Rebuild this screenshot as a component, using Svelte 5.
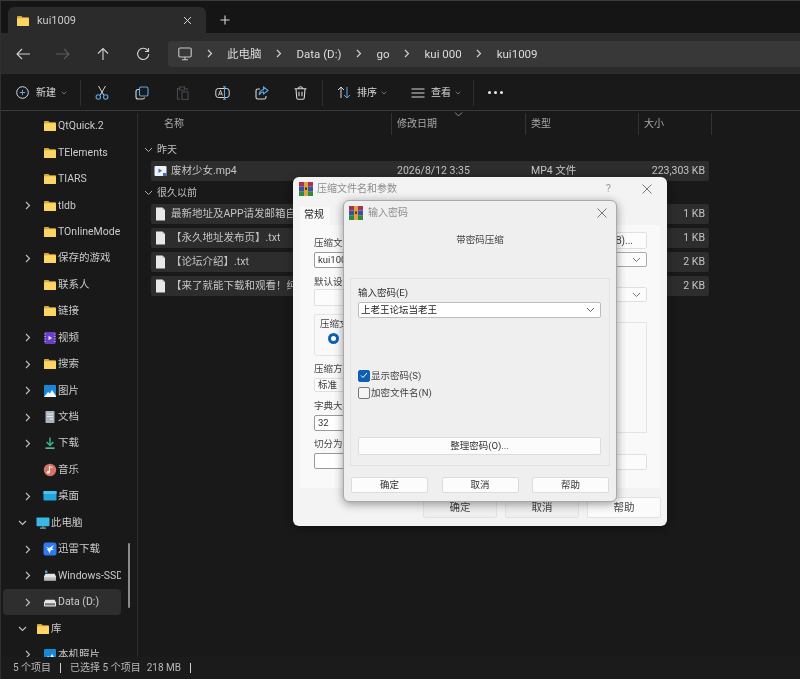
<script>
  const sidebar = [
    { label: 'QtQuick.2', icon: 'folder', level: 2 },
    { label: 'TElements', icon: 'folder', level: 2 },
    { label: 'TIARS', icon: 'folder', level: 2 },
    { label: 'tldb', icon: 'folder', level: 2, chev: 'right' },
    { label: 'TOnlineModel', icon: 'folder', level: 2 },
    { label: '保存的游戏', icon: 'folder', level: 2, chev: 'right' },
    { label: '联系人', icon: 'folder', level: 2 },
    { label: '链接', icon: 'folder', level: 2 },
    { label: '视频', icon: 'video', level: 2, chev: 'right' },
    { label: '搜索', icon: 'folder', level: 2, chev: 'right' },
    { label: '图片', icon: 'picture', level: 2, chev: 'right' },
    { label: '文档', icon: 'doc', level: 2, chev: 'right' },
    { label: '下载', icon: 'download', level: 2, chev: 'right' },
    { label: '音乐', icon: 'music', level: 2 },
    { label: '桌面', icon: 'desktop', level: 2, chev: 'right' },
    { label: '此电脑', icon: 'pc', level: 1, chev: 'down' },
    { label: '迅雷下载', icon: 'xunlei', level: 2, chev: 'right' },
    { label: 'Windows-SSD', icon: 'ssd', level: 2, chev: 'right' },
    { label: 'Data (D:)', icon: 'drive', level: 2, chev: 'right', active: true },
    { label: '库', icon: 'folder', level: 1, chev: 'down' },
    { label: '本机照片', icon: 'picture', level: 2, chev: 'right' }
  ];

  const crumbs = ['此电脑', 'Data (D:)', 'go', 'kui 000', 'kui1009'];

  const recent = [{ name: '废材少女.mp4', date: '2026/8/12 3:35', type: 'MP4 文件', size: '223,303 KB', video: true }];
  const older = [
    { name: '最新地址及APP请发邮箱自动获取.txt', date: '2024/3/2 12:10', type: '文本文档', size: '1 KB' },
    { name: '【永久地址发布页】.txt', date: '2024/3/2 12:10', type: '文本文档', size: '1 KB' },
    { name: '【论坛介绍】.txt', date: '2024/3/2 12:10', type: '文本文档', size: '2 KB' },
    { name: '【来了就能下载和观看！纯免费】.txt', date: '2024/3/2 12:10', type: '文本文档', size: '2 KB' }
  ];
</script>

{#snippet rar()}
  <svg class="rar" viewBox="0 0 14 14">
    <rect x="0" y="0" width="14" height="4.600" fill="#a8324e" />
    <rect x="0" y="4.600" width="14" height="4.600" fill="#3c4fa8" />
    <rect x="0" y="9.200" width="14" height="4.800" fill="#2f8a3c" />
    <rect x="5" y="0" width="4" height="14" fill="#d9a441" />
    <rect x="6" y="5.400" width="2" height="2.600" fill="#5a3a12" />
  </svg>
{/snippet}

{#snippet chevDown(c)}
  <svg width="9" height="6" viewBox="0 0 9 6"><path d="M1 1l3.500 3.500L8 1" fill="none" stroke={c} stroke-width="1" /></svg>
{/snippet}

{#snippet sideIcon(kind)}
  <svg width="14" height="14" viewBox="0 0 14 14">
    {#if kind === 'folder'}
      <path d="M1 3.200c0-.7.4-1.200 1-1.200h3.400l1.300 1.300H12c.6 0 1 .4 1 1V11c0 .6-.4 1-1 1H2c-.6 0-1-.4-1-1z" fill="#d9a63a" />
      <path d="M1 5c0-.5.4-.8 1-.8h10c.6 0 1 .3 1 .8v6c0 .6-.4 1-1 1H2c-.6 0-1-.4-1-1z" fill="#fbd667" />
    {:else if kind === 'video'}
      <rect x="1.500" y="1" width="11" height="12" rx="1.200" fill="#6b3fc4" />
      <path d="M1.500 3h1.200M1.500 5.500h1.200M1.500 8h1.200M1.500 10.500h1.200M11.300 3h1.200M11.300 5.500h1.200M11.300 8h1.200M11.300 10.500h1.200" stroke="#c9b4f2" stroke-width="1" />
      <path d="M5.500 4.800l3.600 2.200-3.600 2.200z" fill="#e6dcfb" />
    {:else if kind === 'picture'}
      <rect x="1" y="1" width="12" height="12" rx="1" fill="#1787d8" />
      <path d="M1 13l4-5 2 1.500 2-3.500 4 6v1z" fill="#f2f8fd" />
    {:else if kind === 'doc'}
      <rect x="2.500" y="1" width="9" height="12" rx=".8" fill="#a9b6c2" />
      <path d="M4 4h6M4 6.500h6M7 9h3" stroke="#e6ebef" stroke-width="1.100" />
    {:else if kind === 'download'}
      <path d="M7 1.500v7.500M3.600 6L7 9.400 10.400 6" fill="none" stroke="#2fb389" stroke-width="1.500" />
      <path d="M2.500 12.200h9" stroke="#8fd9c0" stroke-width="1.300" />
    {:else if kind === 'music'}
      <circle cx="7" cy="7" r="6.200" fill="#d1746a" />
      <path d="M6.500 9V3.500l3 1" fill="none" stroke="#fbe6e2" stroke-width="1.100" />
      <circle cx="5.300" cy="9.300" r="1.500" fill="#fbe6e2" />
    {:else if kind === 'desktop'}
      <rect x=".5" y="2" width="13" height="9.500" rx=".8" fill="#21a5dc" />
      <rect x=".5" y="2" width="13" height="3" fill="#4cc3ec" />
    {:else if kind === 'pc'}
      <rect x=".5" y="1.500" width="13" height="8.800" rx=".8" fill="#3bb7e3" />
      <path d="M4 12.200h6" stroke="#88a4b3" stroke-width="1.300" />
      <path d="M7 10.300v1.600" stroke="#88a4b3" stroke-width="1.200" />
    {:else if kind === 'xunlei'}
      <rect x=".5" y=".5" width="13" height="13" rx="2.500" fill="#2d7bf0" />
      <path d="M2.500 4.500l3.600 1.400L10.800 3 9 6.400l2 1-3.400 1.200-.9 3L5 8.400 3.600 7.400l1.600-.4z" fill="#f4f8ff" />
    {:else if kind === 'ssd'}
      <path d="M2 1.500h2.400v2.600H2z" fill="#3fa0e0" />
      <path d="M1 7.500l1.400-2.800h9.200L13 7.500v3.200c0 .4-.3.7-.7.7H1.700c-.4 0-.7-.3-.7-.7z" fill="#e4e4e4" />
      <rect x="1" y="8.400" width="12" height="3" fill="#b9b9b9" />
    {:else}
      <path d="M1 7.500l1.400-2.800h9.200L13 7.500v3.200c0 .4-.3.7-.7.7H1.700c-.4 0-.7-.3-.7-.7z" fill="#e4e4e4" />
      <rect x="2" y="8.200" width="10" height="2.200" fill="#777" />
    {/if}
  </svg>
{/snippet}

{#snippet fileRow(f)}
  <div class="file-row">
    <div class="file-name">
      {#if f.video}
        <svg width="13" height="12" viewBox="0 0 13 12">
          <rect x=".5" y="1" width="12" height="10" rx="1" fill="#eef1f5" />
          <path d="M4.500 3.500l3.600 2.300-3.600 2.300z" fill="#3f6fc4" />
          <rect x="9" y="8" width="3.500" height="3" fill="#3f6fc4" />
        </svg>
      {:else}
        <svg width="13" height="14" viewBox="0 0 13 14">
          <path d="M2 .5h6.500L11 3v10.500H2z" fill="#e8e8e8" />
          <path d="M8.500 .5L11 3H8.500z" fill="#b9b9b9" />
        </svg>
      {/if}
      <span>{f.name}</span>
    </div>
    <span>{f.date}</span>
    <span>{f.type}</span>
    <span class="size">{f.size}</span>
  </div>
{/snippet}

<div class="window">
  <div class="tabstrip">
    <div class="tab">
      <span class="tab-icon">{@render sideIcon('folder')}</span>
      <span class="tab-title">kui1009</span>
      <svg class="tab-close" width="9" height="9" viewBox="0 0 9 9"><path d="M1 1l7 7M8 1l-7 7" stroke="#d8d8d8" stroke-width="1" /></svg>
    </div>
    <svg class="tab-add" width="10" height="10" viewBox="0 0 10 10"><path d="M5 .5v9M.5 5h9" stroke="#d8d8d8" stroke-width="1.100" /></svg>
  </div>

  <div class="navbar">
    <div class="nav-buttons">
      <svg width="40" height="14" viewBox="0 0 40 14"><path d="M27 7H14M19 2l-5 5 5 5" fill="none" stroke="#d0d0d0" stroke-width="1.100" /></svg>
      <svg width="40" height="14" viewBox="0 0 40 14"><path d="M13 7h13M21 2l5 5-5 5" fill="none" stroke="#5c5c5c" stroke-width="1.100" /></svg>
      <svg width="40" height="14" viewBox="0 0 40 14"><path d="M20 13V1.500M15 6.500l5-5 5 5" fill="none" stroke="#d0d0d0" stroke-width="1.100" /></svg>
      <svg width="40" height="14" viewBox="0 0 40 14"><path d="M25 4a5.600 5.600 0 1 0 .8 3M25.500 1v3.500H22" fill="none" stroke="#d0d0d0" stroke-width="1.100" /></svg>
    </div>
    <div class="address">
      <svg class="pc" width="14" height="14" viewBox="0 0 14 14">
        <rect x=".8" y="1" width="12.400" height="9" rx="1.200" fill="none" stroke="#c8c8c8" stroke-width="1.100" />
        <path d="M7 10v2.500M4 12.800h6" stroke="#c8c8c8" stroke-width="1.100" />
      </svg>
      {#each crumbs as c}
        <svg class="crumb-chev" width="6" height="9" viewBox="0 0 6 9"><path d="M1 1l3.500 3.500L1 8" fill="none" stroke="#d8d8d8" stroke-width="1.100" /></svg>
        <span class="crumb">{c}</span>
      {/each}
    </div>
  </div>

  <div class="toolbar">
    <div class="tool new">
      <svg width="13" height="13" viewBox="0 0 13 13">
        <circle cx="6.500" cy="6.500" r="5.800" fill="none" stroke="#d8d8d8" stroke-width="1" />
        <path d="M6.500 3.800v5.400M3.800 6.500h5.400" stroke="#5aa9e6" stroke-width="1" />
      </svg>
      <span>新建</span>
      {@render chevDown('#9a9a9a')}
    </div>
    <div class="sep"></div>
    <div class="tool icon">
      <svg width="14" height="15" viewBox="0 0 14 15">
        <path d="M3.500 1l5.200 9M10.500 1L5.300 10" fill="none" stroke="#d8d8d8" stroke-width="1" />
        <circle cx="3.300" cy="12" r="2.200" fill="none" stroke="#5aa9e6" stroke-width="1.100" />
        <circle cx="10.700" cy="12" r="2.200" fill="none" stroke="#5aa9e6" stroke-width="1.100" />
      </svg>
    </div>
    <div class="tool icon">
      <svg width="14" height="14" viewBox="0 0 14 14">
        <rect x="4.500" y="1" width="8.500" height="9" rx="1.500" fill="none" stroke="#5aa9e6" stroke-width="1.100" />
        <path d="M4 3.500H3c-1 0-2 .8-2 2V11c0 1.200 1 2 2 2h4.500c1.200 0 2-.8 2-1.500" fill="none" stroke="#d8d8d8" stroke-width="1.100" />
      </svg>
    </div>
    <div class="tool icon">
      <svg width="13" height="14" viewBox="0 0 13 14">
        <path d="M3 2.500H1.500v10.500H4M9.500 2.500H11v2" fill="none" stroke="#4a4a4a" stroke-width="1.100" />
        <rect x="3.500" y="1" width="5" height="3" fill="none" stroke="#4a4a4a" stroke-width="1" />
        <rect x="6" y="6" width="6" height="7.500" fill="none" stroke="#3d4a54" stroke-width="1.100" />
      </svg>
    </div>
    <div class="tool icon">
      <svg width="15" height="14" viewBox="0 0 15 14">
        <rect x=".8" y="2.500" width="13.400" height="9" rx="2.500" fill="none" stroke="#d8d8d8" stroke-width="1" />
        <path d="M3.500 9.500l2-5.200 2 5.200M4.200 8h2.600" fill="none" stroke="#d8d8d8" stroke-width=".9" />
        <path d="M9.500 .8v12.400M8 .8h3M8 13.200h3" fill="none" stroke="#5aa9e6" stroke-width="1.100" />
      </svg>
    </div>
    <div class="tool icon">
      <svg width="14" height="14" viewBox="0 0 14 14">
        <path d="M5 3H2.800C1.800 3 1 3.800 1 4.800v6.400C1 12.200 1.800 13 2.800 13h6.400c1 0 1.800-.8 1.800-1.800V10" fill="none" stroke="#d8d8d8" stroke-width="1.100" />
        <path d="M8.500 1l4.500 3.500L8.500 8V6C6.500 6 5 7 4.200 9c0-3.500 1.800-5 4.300-5.200z" fill="none" stroke="#5aa9e6" stroke-width="1.100" />
      </svg>
    </div>
    <div class="tool icon trash">
      <svg width="13" height="14" viewBox="0 0 13 14">
        <path d="M.5 2.800h12M4.500 2.800c0-1.200.8-2 2-2s2 .8 2 2M2 2.800l.7 9c.1.800.6 1.400 1.400 1.400h4.800c.8 0 1.300-.6 1.400-1.400l.7-9M5 5.800v4.500M8 5.800v4.500" fill="none" stroke="#d8d8d8" stroke-width="1.100" />
      </svg>
    </div>
    <div class="sep"></div>
    <div class="tool sort">
      <svg width="14" height="13" viewBox="0 0 14 13">
        <path d="M4 12V1M1 4l3-3 3 3" fill="none" stroke="#d8d8d8" stroke-width="1" />
        <path d="M10 1v11M7 9l3 3 3-3" fill="none" stroke="#5aa9e6" stroke-width="1" />
      </svg>
      <span>排序</span>
      {@render chevDown('#9a9a9a')}
    </div>
    <div class="tool view">
      <svg width="14" height="10" viewBox="0 0 14 10"><path d="M.5 1h13M.5 5h13M.5 9h13" stroke="#d8d8d8" stroke-width="1" /></svg>
      <span>查看</span>
      {@render chevDown('#9a9a9a')}
    </div>
    <div class="sep"></div>
    <div class="dots"><i></i><i></i><i></i></div>
  </div>

  <div class="body">
    <aside class="sidebar">
      {#each sidebar as item}
        <div class="side-row" class:active={item.active} class:top={item.level === 1}>
          <span class="side-chev">
            {#if item.chev === 'right'}
              <svg width="6" height="9" viewBox="0 0 6 9"><path d="M1 1l3.500 3.500L1 8" fill="none" stroke="#c0c0c0" stroke-width="1.100" /></svg>
            {:else if item.chev === 'down'}
              <svg width="9" height="6" viewBox="0 0 9 6"><path d="M1 1l3.500 3.500L8 1" fill="none" stroke="#c0c0c0" stroke-width="1.100" /></svg>
            {/if}
          </span>
          <span class="side-icon">{@render sideIcon(item.icon)}</span>
          <span class="side-label">{item.label}</span>
        </div>
      {/each}
      <div class="scrollbar"></div>
    </aside>

    <main class="list">
      <div class="list-head">
        <span>名称</span>
        <span class="sorted">修改日期
          <svg class="sort-mark" width="9" height="5" viewBox="0 0 9 5"><path d="M1 .5l3.500 3.500L8 .5" fill="none" stroke="#8a8a8a" stroke-width="1" /></svg>
        </span>
        <span>类型</span>
        <span>大小</span>
      </div>
      <div class="group-title">
        {@render chevDown('#a8a8a8')}
        <span>昨天</span>
      </div>
      <div class="rows">
        {#each recent as f}{@render fileRow(f)}{/each}
      </div>
      <div class="group-title">
        {@render chevDown('#a8a8a8')}
        <span>很久以前</span>
      </div>
      <div class="rows">
        {#each older as f}{@render fileRow(f)}{/each}
      </div>
    </main>
  </div>

  <footer class="status">
    <span>5 个项目</span>
    <i></i>
    <span>已选择 5 个项目</span>
    <span class="status-size">218 MB</span>
    <i></i>
  </footer>

  <div class="dialog params">
    <div class="titlebar">
      {@render rar()}
      <span class="title">压缩文件名和参数</span>
      <span class="help">?</span>
      <svg class="close" width="10" height="10" viewBox="0 0 10 10"><path d="M.5 .5l9 9M9.500 .5l-9 9" stroke="#777" stroke-width="1" /></svg>
    </div>
    <div class="tabs">
      <span class="tab-on">常规</span>
    </div>
    <div class="panel">
      <div class="col left">
        <span class="lab l1">压缩文件名</span>
        <div class="field f1 dark">kui100</div>
        <span class="lab l2">默认设置</span>
        <div class="field f2"></div>
        <div class="format">
          <span class="format-title">压缩文</span>
          <span class="radio"></span>
        </div>
        <span class="lab l3">压缩方式</span>
        <div class="field f3">标准</div>
        <span class="lab l4">字典大小</span>
        <div class="field f4 dark">32</div>
        <span class="lab l5">切分为分卷</span>
        <div class="field f5 dark"></div>
      </div>
      <div class="col right">
        <div class="field browse">(B)...</div>
        <div class="field combo c1">{@render chevDown('#777')}</div>
        <div class="field combo c2">{@render chevDown('#777')}</div>
        <div class="options"></div>
        <div class="field c3"></div>
      </div>
    </div>
    <div class="actions">
      <button>确定</button>
      <button>取消</button>
      <button class="white">帮助</button>
    </div>
  </div>

  <div class="dialog password">
    <div class="titlebar">
      {@render rar()}
      <span class="title">输入密码</span>
      <svg class="close" width="10" height="10" viewBox="0 0 10 10"><path d="M.5 .5l9 9M9.500 .5l-9 9" stroke="#777" stroke-width="1" /></svg>
    </div>
    <div class="subtitle">带密码压缩</div>
    <div class="pw-group">
      <div class="pw-label">输入密码(E)</div>
      <div class="pw-combo">
        <span>上老王论坛当老王</span>
        {@render chevDown('#666')}
      </div>
      <div class="check first">
        <span class="box on">
          <svg width="8" height="7" viewBox="0 0 8 7"><path d="M1 3.500l2 2L7 1" fill="none" stroke="#fff" stroke-width="1" /></svg>
        </span>
        显示密码(S)
      </div>
      <div class="check">
        <span class="box"></span>
        加密文件名(N)
      </div>
      <button class="organize">整理密码(O)...</button>
    </div>
    <div class="pw-actions">
      <button>确定</button>
      <button>取消</button>
      <button>帮助</button>
    </div>
  </div>
</div>

<style>
  :global(body) {
    background: #101010;
  }

  .window {
    position: relative;
    width: 800px;
    height: 679px;
    overflow: hidden;
    display: flex;
    flex-direction: column;
    background: #191919;
    color: #cacaca;
    font-family: Roboto, 'Noto Sans CJK SC', sans-serif;
    font-size: 10px;
    line-height: 14px;
    box-sizing: border-box;
    border-left: 1px solid #2a2f38;
    border-top: 1px solid #3a3a3a;
    filter: blur(0.35px);
  }

  /* title strip */
  .tabstrip {
    height: 32px;
    flex-shrink: 0;
    display: flex;
    align-items: flex-end;
    padding-left: 7px;
    background: #151515;
  }

  .tab {
    width: 198px;
    height: 26px;
    display: flex;
    align-items: center;
    padding: 1px 14px 0 8px;
    box-sizing: border-box;
    background: #2b2b2b;
    border-radius: 6px 6px 0 0;
  }

  .tab-icon {
    display: flex;
  }

  .tab-title {
    margin-left: 7px;
    font-size: 11px;
    flex: 1;
  }

  .tab-add {
    margin: 0 0 8px 14px;
  }

  .navbar {
    height: 41px;
    flex-shrink: 0;
    display: flex;
    align-items: center;
    background: #2b2b2b;
    padding-left: 2px;
  }

  .nav-buttons {
    display: flex;
    width: 165px;
  }

  .address {
    flex: 1;
    height: 26px;
    display: flex;
    align-items: center;
    gap: 14.500px;
    padding-left: 10px;
    background: #383838;
    border-radius: 4px 0 0 4px;
    font-size: 11.500px;
    color: #dcdcdc;
  }

  .toolbar {
    height: 37px;
    flex-shrink: 0;
    display: flex;
    align-items: center;
    padding: 1px 0 0 15px;
    box-sizing: border-box;
    border-bottom: 1px solid #3a3a3a;
    color: #d8d8d8;
  }

  .tool {
    display: flex;
    align-items: center;
  }

  .tool.new {
    width: 64px;
    gap: 7px;
  }

  .tool.new > svg:last-child,
  .tool.sort > svg:last-child,
  .tool.view > svg:last-child {
    width: 6px;
    margin-left: -2px;
  }

  .tool.icon {
    width: 40px;
    justify-content: center;
  }

  .tool.trash {
    margin-left: -2px;
    margin-right: 2px;
  }

  .tool.sort {
    width: 74px;
    margin-left: 14px;
    gap: 6px;
  }

  .tool.view {
    width: 62px;
    gap: 6px;
  }

  .tool span {
    white-space: nowrap;
  }

  .sep {
    width: 1px;
    height: 26px;
    background: #2e2e2e;
  }

  .tool.new + .sep {
    margin-right: 1px;
  }

  .dots {
    display: flex;
    gap: 3px;
    margin-left: 14px;
  }

  .dots i {
    width: 3px;
    height: 3px;
    border-radius: 50%;
    background: #e8e8e8;
  }

  .body {
    flex: 1;
    min-height: 0;
    display: flex;
    overflow: hidden;
    padding-top: 2px;
  }

  /* navigation pane */
  .sidebar {
    position: relative;
    width: 137px;
    flex-shrink: 0;
    box-sizing: border-box;
    border-right: 1px solid #2e2e2e;
    padding-left: 2px;
  }

  .side-row {
    width: 118px;
    height: 26.450px;
    display: flex;
    align-items: center;
    padding-left: 11px;
    box-sizing: border-box;
    border-radius: 4px;
    overflow: hidden;
  }

  .side-row.top {
    padding-left: 6px;
  }

  .side-row.active {
    background: #2e2e2e;
  }

  .side-chev {
    width: 28px;
    display: flex;
    justify-content: center;
    flex-shrink: 0;
  }

  .side-row.top .side-chev {
    width: 26px;
  }

  .side-icon {
    width: 16px;
    display: flex;
    justify-content: center;
    flex-shrink: 0;
  }

  .side-label {
    white-space: nowrap;
    font-size: 10.500px;
  }

  .scrollbar {
    position: absolute;
    left: 127px;
    top: 430px;
    width: 2px;
    height: 65px;
    border-radius: 1px;
    background: #8a8a8a;
  }

  /* file list */
  .list {
    flex: 1;
    min-width: 0;
  }

  .list-head {
    height: 23px;
    display: grid;
    grid-template-columns: 254px 134px 113px 73px;
    color: #a8a8a8;
    margin-bottom: 2px;
  }

  .list-head span {
    position: relative;
    height: 22px;
    line-height: 22px;
    padding-left: 5px;
    border-right: 1px solid #333;
    box-sizing: border-box;
  }

  .list-head span:first-child {
    padding-left: 26px;
  }

  .sort-mark {
    position: absolute;
    left: 62px;
    top: -1px;
  }

  .group-title {
    height: 23px;
    display: flex;
    align-items: center;
    gap: 4px;
    padding-left: 6px;
    color: #c0c0c0;
  }

  .rows {
    display: flex;
    flex-direction: column;
    gap: 4px;
  }

  .file-row {
    width: 558px;
    height: 20px;
    margin-left: 13px;
    display: grid;
    grid-template-columns: 240px 134px 113px 71px;
    align-items: center;
    background: #2d2d2d;
    border-radius: 2px;
    color: #c4c4c4;
    font-size: 10.500px;
  }

  .file-row > span {
    padding-left: 6px;
  }

  .file-name {
    display: flex;
    align-items: center;
    gap: 4px;
    padding-left: 3px;
    white-space: nowrap;
    overflow: hidden;
  }

  .file-row .size {
    text-align: right;
    padding-right: 4px;
  }

  .status {
    height: 22px;
    flex-shrink: 0;
    display: flex;
    align-items: center;
    gap: 9px;
    padding-left: 12px;
    background: #1b1b1b;
    color: #b8b8b8;
  }

  .status i {
    width: 1px;
    height: 10px;
    background: #d0d0d0;
  }

  .status-size {
    margin-left: -3px;
  }

  /* dialogs */
  .dialog {
    position: absolute;
    display: flex;
    flex-direction: column;
    box-sizing: border-box;
    border-radius: 6px;
    color: #333;
    font-size: 9.500px;
    box-shadow: 0 2px 10px rgba(0, 0, 0, 0.4);
  }

  .params {
    left: 292px;
    top: 176px;
    width: 374px;
    height: 349px;
    background: #f3f3f3;
  }

  .password {
    left: 342px;
    top: 199px;
    width: 274px;
    height: 302px;
    padding: 0 6px;
    background: #efefef;
    border: 1px solid #a9a9a9;
  }

  .titlebar {
    height: 24px;
    flex-shrink: 0;
    display: flex;
    align-items: center;
    padding-left: 6px;
  }

  .password .titlebar {
    height: 23px;
    margin: 0 -6px;
    padding-left: 5px;
  }

  .rar {
    width: 14px;
    height: 14px;
    flex-shrink: 0;
  }

  .title {
    margin-left: 4px;
    flex: 1;
    font-size: 10px;
    color: #8c8c8c;
  }

  .password .title {
    margin-left: 5px;
  }

  .help {
    color: #9a9a9a;
    font-size: 11px;
    margin-right: 31px;
  }

  .close {
    margin-right: 15px;
  }

  .password .close {
    margin-right: 9px;
  }

  .tabs {
    height: 24px;
    flex-shrink: 0;
    display: flex;
    align-items: center;
    padding-left: 7px;
    gap: 4px;
  }

  .tab-on {
    padding: 0 6px 0 4px;
    align-self: flex-end;
    height: 18px;
    line-height: 16px;
    background: #f9f9f9;
    font-size: 10px;
    color: #222;
  }

  .panel {
    height: 263px;
    margin: 0 7px;
    padding: 0 13px 0 14px;
    display: flex;
    gap: 12px;
    background: #f9f9f9;
    box-sizing: border-box;
  }

  .col {
    display: flex;
    flex-direction: column;
  }

  .col.left {
    width: 160px;
  }

  .col.right {
    flex: 1;
  }

  .lab {
    height: 14px;
    color: #444;
    white-space: nowrap;
  }

  .l1 {
    margin-top: 11px;
  }

  .l2 {
    margin-top: 7px;
  }

  .l3 {
    margin-top: 6px;
  }

  .l4 {
    margin-top: 7px;
  }

  .l5 {
    margin-top: 6px;
  }

  .field {
    box-sizing: border-box;
    display: flex;
    align-items: center;
    padding-left: 3px;
    background: #fcfcfc;
    border: 1px solid #e0e0e0;
    border-radius: 2px;
    color: #333;
  }

  .field.dark {
    border-color: #9a9a9a;
    background: #fff;
  }

  .f1 {
    height: 16px;
    margin-top: 2px;
  }

  .f2 {
    height: 17px;
  }

  .f3 {
    height: 14px;
    margin-top: 2px;
  }

  .f4 {
    height: 16px;
    margin-top: 2px;
  }

  .f5 {
    height: 16px;
    margin-top: 2px;
  }

  .format {
    height: 42px;
    margin-top: 8px;
    padding: 2px 0 0 5px;
    box-sizing: border-box;
    border: 1px solid #e4e4e4;
    border-radius: 2px;
  }

  .format-title {
    display: block;
    height: 14px;
    color: #444;
  }

  .radio {
    display: block;
    width: 11px;
    height: 11px;
    margin: 2px 0 0 8px;
    box-sizing: border-box;
    border-radius: 50%;
    border: 3px solid #0f5fb5;
    background: #fff;
  }

  .browse {
    align-self: flex-end;
    width: 66px;
    height: 17px;
    margin-top: 7px;
    padding: 0 13px 0 0;
    justify-content: flex-end;
    color: #444;
    font-size: 10px;
  }

  .combo {
    justify-content: flex-end;
    padding-right: 5px;
  }

  .c1 {
    height: 15px;
    margin-top: 3px;
    border-color: #aaa;
  }

  .c2 {
    height: 15px;
    margin-top: 20px;
  }

  .options {
    height: 109px;
    margin-top: 20px;
    border: 1px solid #e4e4e4;
  }

  .c3 {
    height: 16px;
    margin-top: 21px;
  }

  .actions {
    display: flex;
    justify-content: flex-end;
    gap: 8px;
    padding: 9px 6px 0 0;
  }

  .actions button {
    width: 74px;
    height: 21px;
    padding: 0;
    font: inherit;
    font-size: 10.500px;
    color: #444;
    background: #efefef;
    border: 1px solid #e2e2e2;
    border-radius: 2px;
  }

  .actions button.white {
    background: #fbfbfb;
  }

  /* password dialog */
  .subtitle {
    height: 14px;
    margin-top: 9px;
    text-align: center;
    color: #444;
  }

  .pw-group {
    height: 188px;
    margin-top: 31px;
    padding: 7px 8px 0 7px;
    box-sizing: border-box;
    border: 1px solid #e3e3e3;
    border-radius: 2px;
    display: flex;
    flex-direction: column;
  }

  .pw-label {
    height: 14px;
    color: #333;
  }

  .pw-combo {
    height: 16px;
    margin-top: 2px;
    padding: 0 5px 0 2px;
    box-sizing: border-box;
    display: flex;
    align-items: center;
    justify-content: space-between;
    background: #fff;
    border: 1px solid #bcbcbc;
    border-radius: 2px;
    color: #222;
  }

  .check {
    height: 13px;
    margin-top: 4px;
    display: flex;
    align-items: center;
    gap: 1px;
    color: #444;
  }

  .check.first {
    margin-top: 51px;
  }

  .box {
    width: 12px;
    height: 12px;
    box-sizing: border-box;
    display: flex;
    align-items: center;
    justify-content: center;
    border: 1px solid #777;
    border-radius: 2px;
    background: #f4f4f4;
  }

  .box.on {
    background: #0f5fb5;
    border-color: #0f5fb5;
  }

  .organize {
    height: 18px;
    margin-top: 38px;
    padding: 0;
    font: inherit;
    color: #333;
    background: #fcfcfc;
    border: 1px solid #dcdcdc;
    border-radius: 2px;
  }

  .pw-actions {
    display: flex;
    justify-content: space-between;
    margin-top: 11px;
    padding: 0 1px;
  }

  .pw-actions button {
    width: 77px;
    height: 16px;
    padding: 0;
    font: inherit;
    color: #333;
    background: #fcfcfc;
    border: 1px solid #dcdcdc;
    border-radius: 2px;
  }
</style>
